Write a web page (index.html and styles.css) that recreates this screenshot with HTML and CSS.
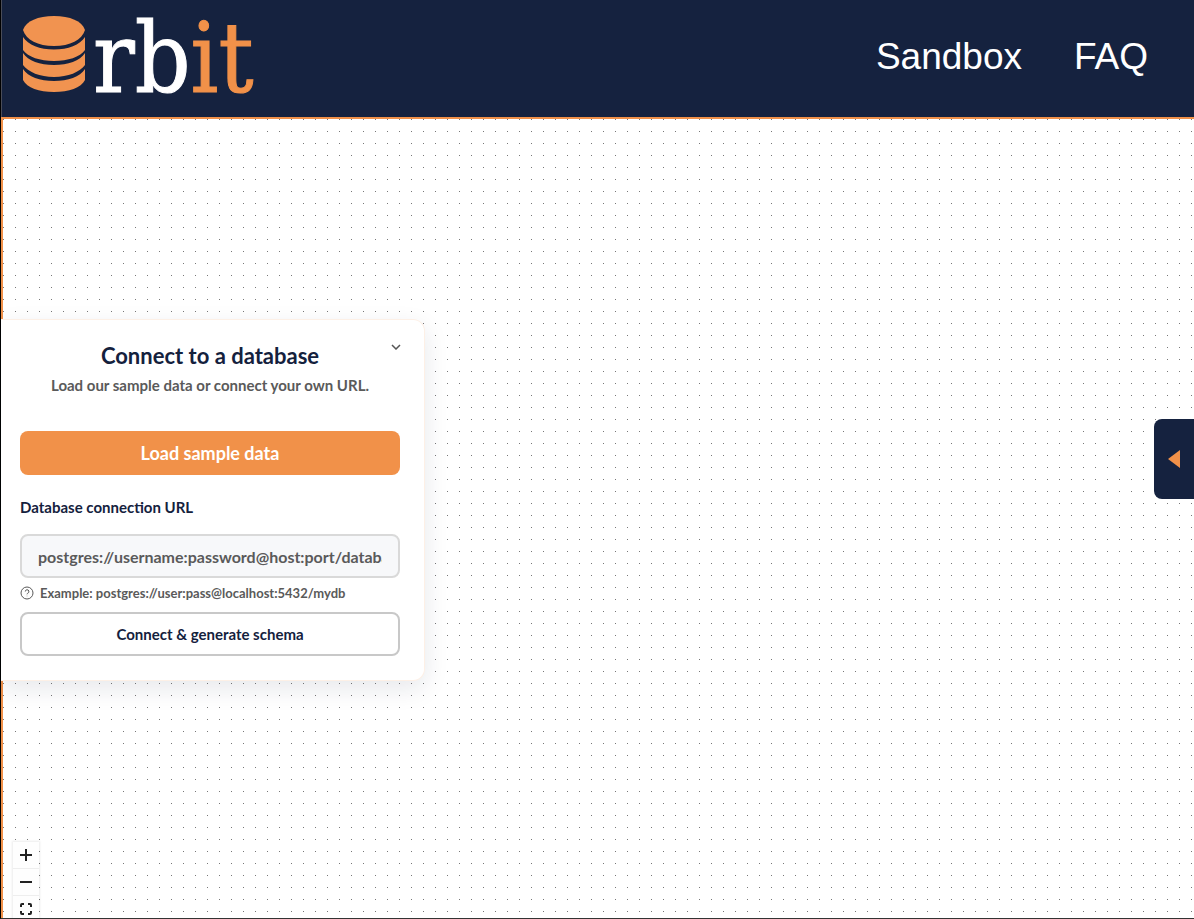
FILE: index.html
```html
<!DOCTYPE html>
<html lang="en">
<head>
<meta charset="utf-8">
<meta name="viewport" content="width=device-width, initial-scale=1">
<title>Orbit</title>
<link rel="stylesheet" href="styles.css">
</head>
<body>
<div class="app">
  <header class="header">
    <a class="logo" href="#" aria-label="Orbit">
      <svg class="logo-mark" viewBox="0 0 62 78" aria-hidden="true">
        <path d="M0 15C3 6 15 1 31 1s28 5 31 14C59 25 47 31 31 31S3 25 0 15Z"/>
        <path d="M0 22c5 8 17 12.500 31 12.500S57 30 62 22v13c-5 7-17 11-31 11S5 42 0 35Z"/>
        <path d="M0 38c5 8 17 12 31 12s26-4 31-12v12c-5 7-17 12-31 12S5 57 0 50Z"/>
        <path d="M0 54c5 8 17 12 31 12s26-4 31-12v11c-4 8-16 12-31 12S4 73 0 65Z"/>
      </svg>
      <span class="logo-text">rb<span class="logo-accent">it</span></span>
    </a>
    <nav class="nav">
      <a href="#">Sandbox</a>
      <a href="#">FAQ</a>
    </nav>
  </header>

  <main class="canvas">
    <svg class="dots" aria-hidden="true">
      <defs>
        <pattern id="dot-grid" width="12" height="12" patternUnits="userSpaceOnUse">
          <rect width="1" height="1" fill="#777"/>
        </pattern>
      </defs>
      <rect width="100%" height="100%" fill="url(#dot-grid)"/>
    </svg>

    <form class="card">
      <div class="card-head">
        <h1 class="card-title">Connect to a database</h1>
        <p class="card-text">Load our sample data or connect your own URL.</p>
        <button class="collapse" type="button" aria-label="Collapse">
          <svg viewBox="0 0 10 6" aria-hidden="true"><path d="M1 1l4 4 4-4"/></svg>
        </button>
      </div>
      <button class="btn btn-primary" type="button">Load sample data</button>
      <label class="label" for="db-url">Database connection URL</label>
      <input class="field" id="db-url" type="text" placeholder="postgres://username:password@host:port/database">
      <p class="hint">
        <svg viewBox="0 0 14 14" aria-hidden="true">
          <circle cx="7" cy="7" r="6"/>
          <path d="M5.300 5.500a1.800 1.800 0 1 1 2.500 1.700c-.6.3-.8.600-.8 1.100"/>
          <path d="M7 9.800v.4"/>
        </svg>
        Example: postgres://user:pass@localhost:5432/mydb
      </p>
      <button class="btn btn-outline" type="submit">Connect &amp; generate schema</button>
    </form>

    <div class="controls">
      <button type="button" aria-label="Zoom in">
        <svg viewBox="0 0 12 12" aria-hidden="true"><path d="M0 6h12M6 0v12"/></svg>
      </button>
      <button type="button" aria-label="Zoom out">
        <svg viewBox="0 0 12 12" aria-hidden="true"><path d="M0 6h12"/></svg>
      </button>
      <button type="button" aria-label="Fit view">
        <svg viewBox="0 0 12 12" aria-hidden="true"><path d="M1 4V2q0-1 1-1h2M8 1h2q1 0 1 1v2M11 8v2q0 1-1 1H8M4 11H2q-1 0-1-1V8"/></svg>
      </button>
    </div>
  </main>

  <button class="drawer-toggle" type="button" aria-label="Open panel">
    <svg viewBox="0 0 12 18" aria-hidden="true"><path d="M12 0v18L0 9Z"/></svg>
  </button>
</div>
</body>
</html>
```
FILE: styles.css
```css
* {
  box-sizing: border-box;
}

body {
  margin: 0;
  font-family: Lato, "Open Sans", sans-serif;
  font-weight: 700;
  color: #14213d;
}

button,
input {
  font: inherit;
}

button {
  padding: 0;
  cursor: pointer;
}

.app {
  position: relative;
  display: grid;
  grid-template-rows: auto 1fr;
  height: 100vh;
  border-left: 1px solid #000;
  border-bottom: 1px solid #333;
}

.header {
  display: flex;
  align-items: center;
  justify-content: space-between;
  padding: 0 46px 0 21px;
  border-left: 1px solid #4a4d58;
  background: #15223f;
}

.logo {
  display: flex;
  align-items: center;
  gap: 8px;
  color: #fff;
  text-decoration: none;
}

.logo-mark {
  width: 62px;
  height: 78px;
  margin-bottom: 9px;
  fill: #f19350;
}

.logo-text {
  font-family: "DejaVu Serif Condensed", "DejaVu Serif", serif;
  font-weight: 400;
  font-size: 97px;
  line-height: 117px;
  -webkit-text-stroke: 1px currentColor;
}

.logo-accent {
  color: #f19149;
}

.nav {
  display: flex;
  gap: 52px;
  padding-bottom: 4px;
  font-family: "Liberation Sans", Arial, sans-serif;
  font-weight: 400;
  font-size: 37px;
  line-height: 44px;
}

.nav a {
  color: #fff;
  text-decoration: none;
}

.canvas {
  position: relative;
  min-height: 0;
  border: solid #f19149;
  border-width: 2px 0 0 2px;
  background: #fff;
}

.dots {
  position: absolute;
  inset: 0;
  width: 100%;
  height: 100%;
}

.card {
  position: absolute;
  top: 200px;
  left: -2px;
  display: flex;
  flex-direction: column;
  width: 424px;
  padding: 24px 24px 24px 19px;
  border: 1px solid #fdf0e6;
  border-left: 0;
  border-radius: 0 12px 12px 0;
  background: #fff;
  box-shadow: 0 8px 24px rgba(20, 33, 61, 0.1);
}

.card-head {
  position: relative;
  margin-bottom: 34px;
  text-align: center;
}

.card-title {
  margin: 0;
  font-size: 22px;
  line-height: 24px;
}

.card-text {
  margin: 6px 0 0;
  font-size: 15px;
  line-height: 23px;
  color: #5a5a5a;
}

.collapse {
  position: absolute;
  top: -9px;
  right: -8px;
  display: grid;
  place-items: center;
  width: 24px;
  height: 24px;
  border: 0;
  background: none;
}

.collapse svg {
  width: 10px;
  height: 6px;
  fill: none;
  stroke: #555;
  stroke-width: 1.5;
}

.btn {
  height: 44px;
  border-radius: 8px;
}

.btn-primary {
  border: 0;
  background: #f19149;
  color: #fff;
  font-size: 18px;
}

.btn-outline {
  border: 2px solid #c8c8c8;
  background: #fff;
  color: #14213d;
  font-size: 15px;
}

.label {
  margin: 20px 0 15px;
  font-size: 15px;
  line-height: 24px;
}

.field {
  height: 44px;
  padding: 0 16px;
  border: 2px solid #d9d9d9;
  border-radius: 8px;
  background: #f7f8fa;
  color: #14213d;
  font-size: 16px;
}

.field::placeholder {
  color: #5a5a5a;
  opacity: 1;
}

.hint {
  display: flex;
  align-items: center;
  gap: 6px;
  margin: 6px 0 10px;
  font-size: 13px;
  line-height: 18px;
  color: #5a5a5a;
}

.hint svg {
  width: 14px;
  height: 14px;
  fill: none;
  stroke: currentColor;
  stroke-width: 1;
}

.controls {
  position: absolute;
  top: 723px;
  bottom: 0;
  left: 10px;
  overflow: hidden;
  box-shadow: 0 0 2px 1px rgba(0, 0, 0, 0.08);
}

.controls button {
  display: grid;
  place-items: center;
  width: 26px;
  height: 27px;
  border: 0;
  border-bottom: 1px solid #eee;
  background: #fefefe;
}

.controls svg {
  width: 12px;
  height: 12px;
  fill: none;
  stroke: #222;
  stroke-width: 2;
}

.drawer-toggle {
  position: absolute;
  top: 50%;
  right: 0;
  display: grid;
  place-items: center;
  width: 40px;
  height: 80px;
  border: 0;
  border-radius: 8px 0 0 8px;
  background: #15223f;
  transform: translateY(-50%);
}

.drawer-toggle svg {
  width: 12px;
  height: 18px;
  fill: #f19149;
}
```
